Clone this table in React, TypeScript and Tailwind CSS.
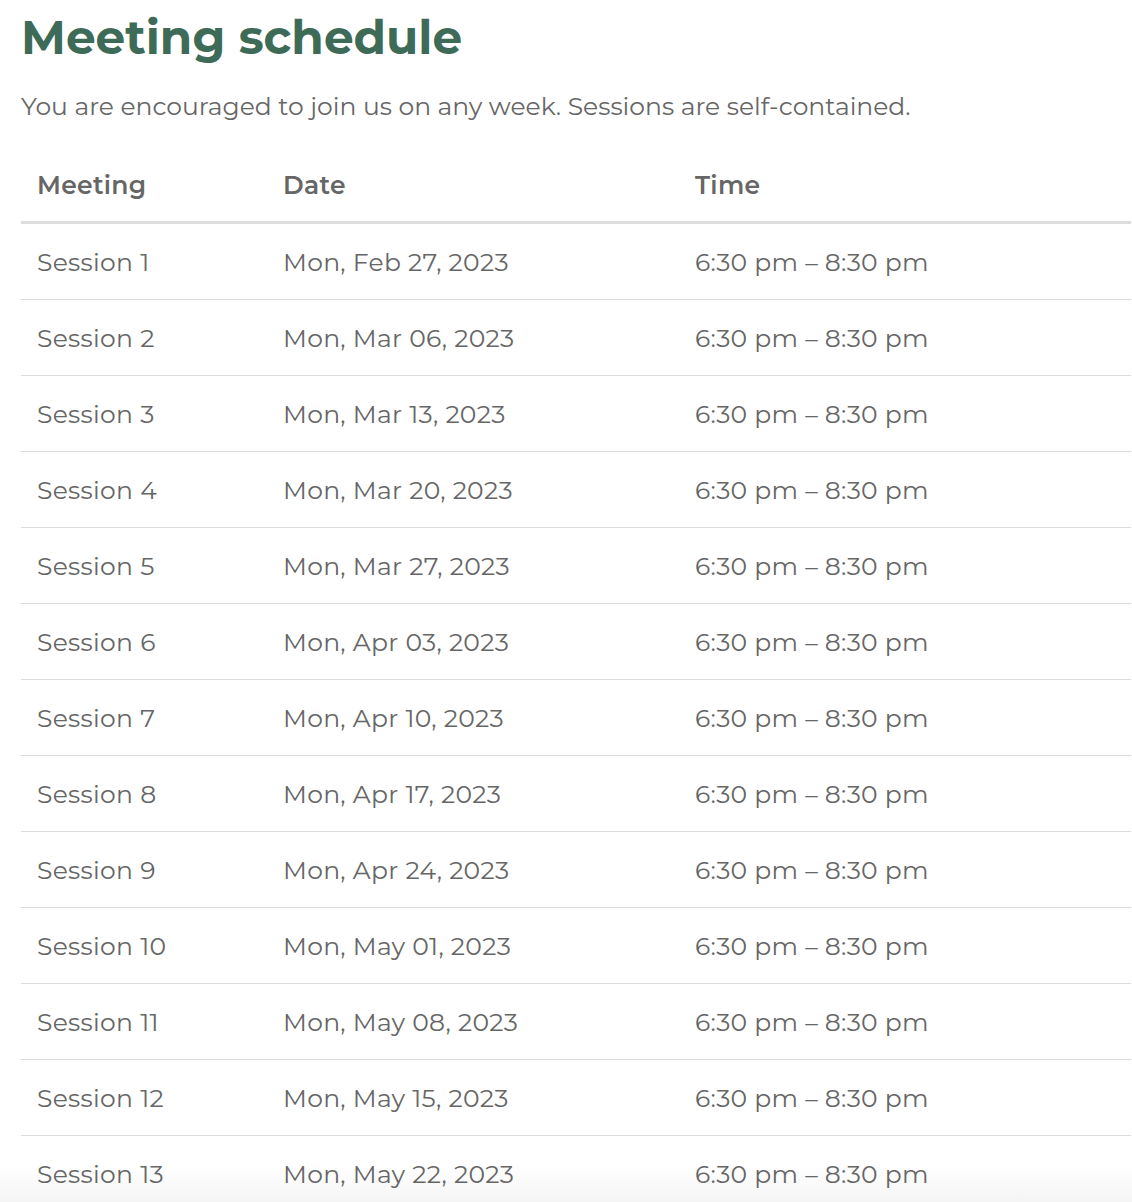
import React from 'react';

const sessions = [
  ['Session 1', 'Mon, Feb 27, 2023'],
  ['Session 2', 'Mon, Mar 06, 2023'],
  ['Session 3', 'Mon, Mar 13, 2023'],
  ['Session 4', 'Mon, Mar 20, 2023'],
  ['Session 5', 'Mon, Mar 27, 2023'],
  ['Session 6', 'Mon, Apr 03, 2023'],
  ['Session 7', 'Mon, Apr 10, 2023'],
  ['Session 8', 'Mon, Apr 17, 2023'],
  ['Session 9', 'Mon, Apr 24, 2023'],
  ['Session 10', 'Mon, May 01, 2023'],
  ['Session 11', 'Mon, May 08, 2023'],
  ['Session 12', 'Mon, May 15, 2023'],
  ['Session 13', 'Mon, May 22, 2023'],
];

const App = () => {
  return (
    <div className="relative h-[1202px] overflow-hidden bg-white font-['Montserrat','Open_Sans',sans-serif] text-[#666]">
      {/* soft fade at the bottom, behind the text */}
      <div className="pointer-events-none absolute inset-x-0 bottom-0 h-[38px] bg-gradient-to-b from-white to-[#f5f5f5]"></div>

      <div className="relative px-[21px]">
        <h1 className="pt-[9px] text-[47px] font-bold leading-[58px] text-[#3e6a58]">
          Meeting schedule
        </h1>

        <p className="mt-[21px] text-[25px] leading-[36px]">
          You are encouraged to join us on any week. Sessions are self-contained.
        </p>

        {/* schedule table */}
        <table className="mt-[22px] w-[1110px] table-fixed border-collapse text-left text-[25px] tracking-[0.3px]">
          <colgroup>
            <col className="w-[246px]" />
            <col className="w-[412px]" />
            <col />
          </colgroup>
          <thead>
            <tr className="border-b-[3px] border-[#ddd]">
              <th className="px-4 pt-[24px] pb-[20px] font-semibold leading-[31px]">Meeting</th>
              <th className="px-4 pt-[24px] pb-[20px] font-semibold leading-[31px]">Date</th>
              <th className="px-4 pt-[24px] pb-[20px] font-semibold leading-[31px]">Time</th>
            </tr>
          </thead>
          <tbody>
            {sessions.map(([name, date]) => (
              <tr key={name} className="border-b border-[#ddd]">
                <td className="px-4 pt-[23px] pb-[21px] leading-[31px]">{name}</td>
                <td className="px-4 pt-[23px] pb-[21px] leading-[31px]">{date}</td>
                <td className="px-4 pt-[23px] pb-[21px] leading-[31px]">6:30 pm – 8:30 pm</td>
              </tr>
            ))}
          </tbody>
        </table>
      </div>
    </div>
  );
};

export default App;
